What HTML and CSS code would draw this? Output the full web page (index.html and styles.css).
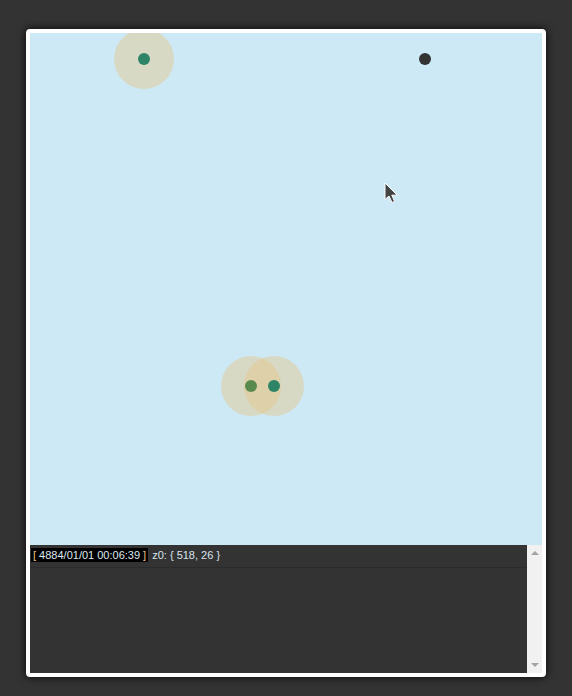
FILE: index.html
```html
<!DOCTYPE html>
<html>
<head>
<meta charset="utf-8">
<link rel="stylesheet" href="styles.css">
</head>
<body>
<div class="frame">
  <div class="map">
    <svg class="map-svg" width="512" height="512" viewBox="0 0 512 512">
      <circle cx="114" cy="26" r="30" class="range"/>
      <circle cx="114" cy="26" r="6" class="unit"/>
      <circle cx="395" cy="26" r="6" class="enemy"/>
      <circle cx="221" cy="353" r="30" class="range"/>
      <circle cx="244" cy="353" r="30" class="range"/>
      <circle cx="221" cy="353" r="6" class="unit shaded"/>
      <circle cx="244" cy="353" r="6" class="unit"/>
      <g class="cursor" transform="translate(355,150)">
        <path d="M0 0 L0 16.5 L4 13 L7 19.5 L9.6 18.4 L6.8 12.2 L12.2 12.2 Z" fill="#444" stroke="#fff" stroke-width="1" stroke-linejoin="round"/>
      </g>
    </svg>
  </div>
  <div class="log">
    <div class="log-lines">
      <div class="line">
        <span class="stamp"><span class="br">[</span> 4884/01/01 00:06:39 <span class="br">]</span></span>
        <span class="msg">z0: { 518, 26 }</span>
      </div>
    </div>
    <div class="scrollbar">
      <span class="arrow up"></span>
      <span class="arrow down"></span>
    </div>
  </div>
</div>
</body>
</html>
```

FILE: styles.css
```css
html, body {
  margin: 0;
  padding: 0;
  background: #333333;
  height: 100%;
}
body {
  padding-top: 29px;
  font-family: "Liberation Sans", Arial, sans-serif;
}
.frame {
  width: 512px;
  margin: 0 auto;
  border: 4px solid #ffffff;
  border-radius: 4px;
  background: #333;
  box-shadow: 0 0 8px rgba(0,0,0,0.9);
}
.map {
  width: 512px;
  height: 512px;
  background: #cce9f5;
  overflow: hidden;
}
.map-svg {
  display: block;
}
.range {
  fill: rgba(232, 196, 130, 0.42);
}
.unit {
  fill: #2e8466;
}
.unit.shaded {
  fill: #588a4e;
}
.enemy {
  fill: #333333;
}
.log {
  display: flex;
  height: 128px;
}
.log-lines {
  flex: 1;
  background: #333333;
}
.line {
  height: 20px;
  padding-bottom: 2px;
  border-bottom: 1px solid #2b2b2b;
  display: flex;
  align-items: center;
  gap: 4px;
  padding-left: 1px;
  font-size: 11px;
}
.stamp {
  background: #000;
  color: #dde8f0;
  padding: 0 2px 0 2px;
  line-height: 14px;
  white-space: pre;
}
.br {
  color: #f0c080;
}
.msg {
  color: #d8e4ee;
}
.scrollbar {
  width: 15px;
  background: #f1f1f1;
  display: flex;
  flex-direction: column;
  justify-content: space-between;
  align-items: center;
  padding: 6px 0 6px;
  box-sizing: border-box;
}
.arrow {
  width: 0;
  height: 0;
  border-left: 4px solid transparent;
  border-right: 4px solid transparent;
}
.arrow.up {
  border-bottom: 4px solid #a3a3a3;
}
.arrow.down {
  border-top: 4px solid #a3a3a3;
}
```
